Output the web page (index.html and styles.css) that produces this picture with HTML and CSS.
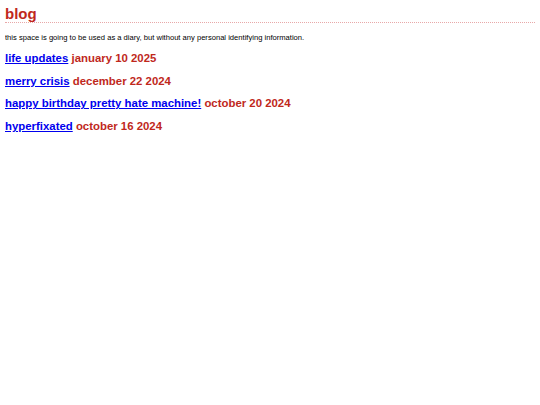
FILE: index.html
```html
<!DOCTYPE html>
<html>
<head>
<meta charset="utf-8">
<link rel="stylesheet" href="styles.css">
</head>
<body>
<h1 class="title">blog</h1>
<p class="intro">this space is going to be used as a diary, but without any personal identifying information.</p>
<ul class="posts">
<li class="post"><a href="#">life updates</a> <span class="date">january 10 2025</span></li>
<li class="post"><a href="#">merry crisis</a> <span class="date">december 22 2024</span></li>
<li class="post"><a href="#">happy birthday pretty hate machine!</a> <span class="date">october 20 2024</span></li>
<li class="post"><a href="#">hyperfixated</a> <span class="date">october 16 2024</span></li>
</ul>
</body>
</html>
```
FILE: styles.css
```css
body {
  margin: 5px;
  font-family: "Liberation Sans", Arial, sans-serif;
  background: #fff;
  color: #000;
}
.title {
  margin: 0;
  font-size: 15px;
  line-height: 17px;
  color: #c0281c;
  border-bottom: 1px dotted #e8a8a8;
}
.intro {
  font-size: 7.6px;
  margin: 10px 0 0;
  line-height: 10px;
}
.posts {
  list-style: none;
  margin: 8px 0 0;
  padding: 0;
}
.post {
  font-size: 11.4px;
  font-weight: bold;
  line-height: 15px;
  margin-bottom: 7.7px;
  color: #c0281c;
}
.post a {
  color: #0000ee;
}
```
